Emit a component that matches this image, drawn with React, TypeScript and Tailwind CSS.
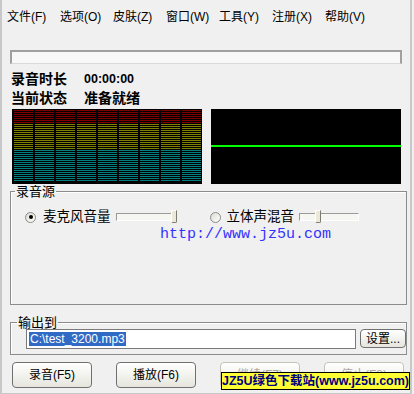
import React from "react";

const menus = ["文件(F)", "选项(O)", "皮肤(Z)", "窗口(W)", "工具(Y)", "注册(X)", "帮助(V)"];

const stripes = {
  red: "bg-[repeating-linear-gradient(180deg,#800000_0px,#800000_1px,#000000_1px,#000000_2px)]",
  olive: "bg-[repeating-linear-gradient(180deg,#808000_0px,#808000_1px,#000000_1px,#000000_2px)]",
  teal: "bg-[repeating-linear-gradient(180deg,#008080_0px,#008080_1px,#000000_1px,#000000_2px)]",
};

const Radio = ({ checked }: { checked?: boolean }) => (
  <span className="flex h-[11px] w-[11px] items-center justify-center rounded-full border border-[#8a8a8a] bg-gradient-to-br from-[#dcdcd4] to-white">
    {checked && <span className="h-[4px] w-[4px] rounded-full bg-black" />}
  </span>
);

const Slider = ({ thumb }: { thumb: string }) => (
  <div className="relative ml-[5px] h-[8px] w-[60px] border-t border-l border-[#9a9a9a] border-r border-b border-r-white border-b-white bg-[#f6f6f2]">
    <div
      className={`absolute top-[-4px] ${thumb} h-[13px] w-[6px] rounded-b-[2px] border-t border-l border-white border-r border-b border-r-[#7a7a70] border-b-[#7a7a70] bg-[#ece9d8]`}
    />
  </div>
);

const Button = ({ label, disabled }: { label: string; disabled?: boolean }) => (
  <button
    className={`flex h-[26px] w-[80px] items-center justify-center rounded-[4px] border bg-gradient-to-b from-white to-[#e6e6de] text-[12px] ${
      disabled ? "border-[#c5c3b8] text-[#aca899]" : "border-[#707070] text-black"
    }`}
  >
    {label}
  </button>
);

export default function App() {
  return (
    <div className="h-[394px] w-[414px] bg-[#f0f0f0] font-['Liberation_Sans','Noto_Sans_CJK_SC',sans-serif] text-black">
      <div className="relative h-[394px] w-[412px] border-x-2 border-b border-[#c8c8c8]">
        {/* menu */}
        <div className="flex pl-[5px] pt-[10px] text-[12px] leading-[14px]">
          {menus.map((m) => (
            <span key={m} className="w-[53px] whitespace-nowrap">
              {m}
            </span>
          ))}
        </div>

        {/* info bar */}
        <div className="ml-[8px] mt-[26px] h-[14px] w-[392px] border-t-2 border-l-2 border-r-2 border-b border-[#a0a0a0] border-b-[#d8d8d8] bg-[#f8f8f8]" />

        {/* status */}
        <div className="ml-[9px] mt-[6px] text-[14px] font-bold leading-[19px]">
          <div className="flex">
            <span className="w-[73px]">录音时长</span>
            <span className="text-[12.5px]">00:00:00</span>
          </div>
          <div className="flex">
            <span className="w-[73px]">当前状态</span>
            <span>准备就绪</span>
          </div>
        </div>

        {/* meters */}
        <div className="ml-[10px] mt-[1px] flex gap-[9px]">
          <div className="flex h-[75px] w-[190px] gap-[2px] bg-black pl-[2px] pr-[1px] pt-[1px]">
            {Array.from({ length: 9 }).map((_, i) => (
              <div key={i} className="flex w-[19px] flex-col">
                <div className={`h-[14px] ${stripes.red}`} />
                <div className={`h-[26px] ${stripes.olive}`} />
                <div className={`h-[32px] ${stripes.teal}`} />
              </div>
            ))}
          </div>
          <div className="h-[75px] w-[190px] bg-black pt-[36px]">
            <div className="h-[2px] bg-[#00ff00]" />
          </div>
        </div>

        {/* source group */}
        <fieldset className="ml-[8px] mt-[1px] h-[120px] w-[397px] border border-[#8c8c8c] shadow-[inset_1px_1px_0_#ffffff]">
          <legend className="ml-[4px] px-[1px] text-[13px] leading-[13px]">录音源</legend>
          <div className="mt-[12px] flex h-[14px] items-center text-[13.5px] leading-[14px]">
            <span className="ml-[14px]">
              <Radio checked />
            </span>
            <span className="ml-[7px] whitespace-nowrap">麦克风音量</span>
            <Slider thumb="left-[54px]" />
            <span className="ml-[34px]">
              <Radio />
            </span>
            <span className="ml-[6px] whitespace-nowrap">立体声混音</span>
            <Slider thumb="left-[15px]" />
          </div>
          <div className="ml-[149px] mt-[2px] font-['Liberation_Mono',monospace] text-[15px] leading-[17px] text-[#3333ff]">
            http://www.jz5u.com
          </div>
        </fieldset>

        {/* output group */}
        <fieldset className="ml-[8px] mt-[11px] h-[39px] w-[397px] border border-[#8c8c8c] shadow-[inset_1px_1px_0_#ffffff]">
          <legend className="ml-[6px] px-[1px] text-[13px] leading-[13px]">输出到</legend>
          <div className="flex items-start">
            <div className="ml-[15px] flex h-[20px] w-[330px] items-center border border-[#7a7a7a] bg-white pl-[2px]">
              <span className="bg-[#316ac5] px-[1px] text-[12px] leading-[14px] text-white">C:\test_3200.mp3</span>
            </div>
            <button className="ml-[4px] flex h-[19px] w-[46px] items-center justify-center rounded-[4px] border border-[#707070] bg-gradient-to-b from-white to-[#e6e6de] text-[12px]">
              设置...
            </button>
          </div>
        </fieldset>

        {/* buttons */}
        <div className="ml-[10px] mt-[7px] flex gap-[24px]">
          <Button label="录音(F5)" />
          <Button label="播放(F6)" />
          <Button label="继续(F7)" disabled />
          <Button label="停止(F8)" disabled />
        </div>

        {/* watermark banner */}
        <div className="absolute left-[219px] top-[372px] flex h-[18px] w-[189px] items-center justify-center border border-black bg-[#ffff33] text-[12.5px] font-bold whitespace-nowrap text-[#000080]">
          JZ5U绿色下载站(www.jz5u.com)
        </div>
      </div>
    </div>
  );
}
